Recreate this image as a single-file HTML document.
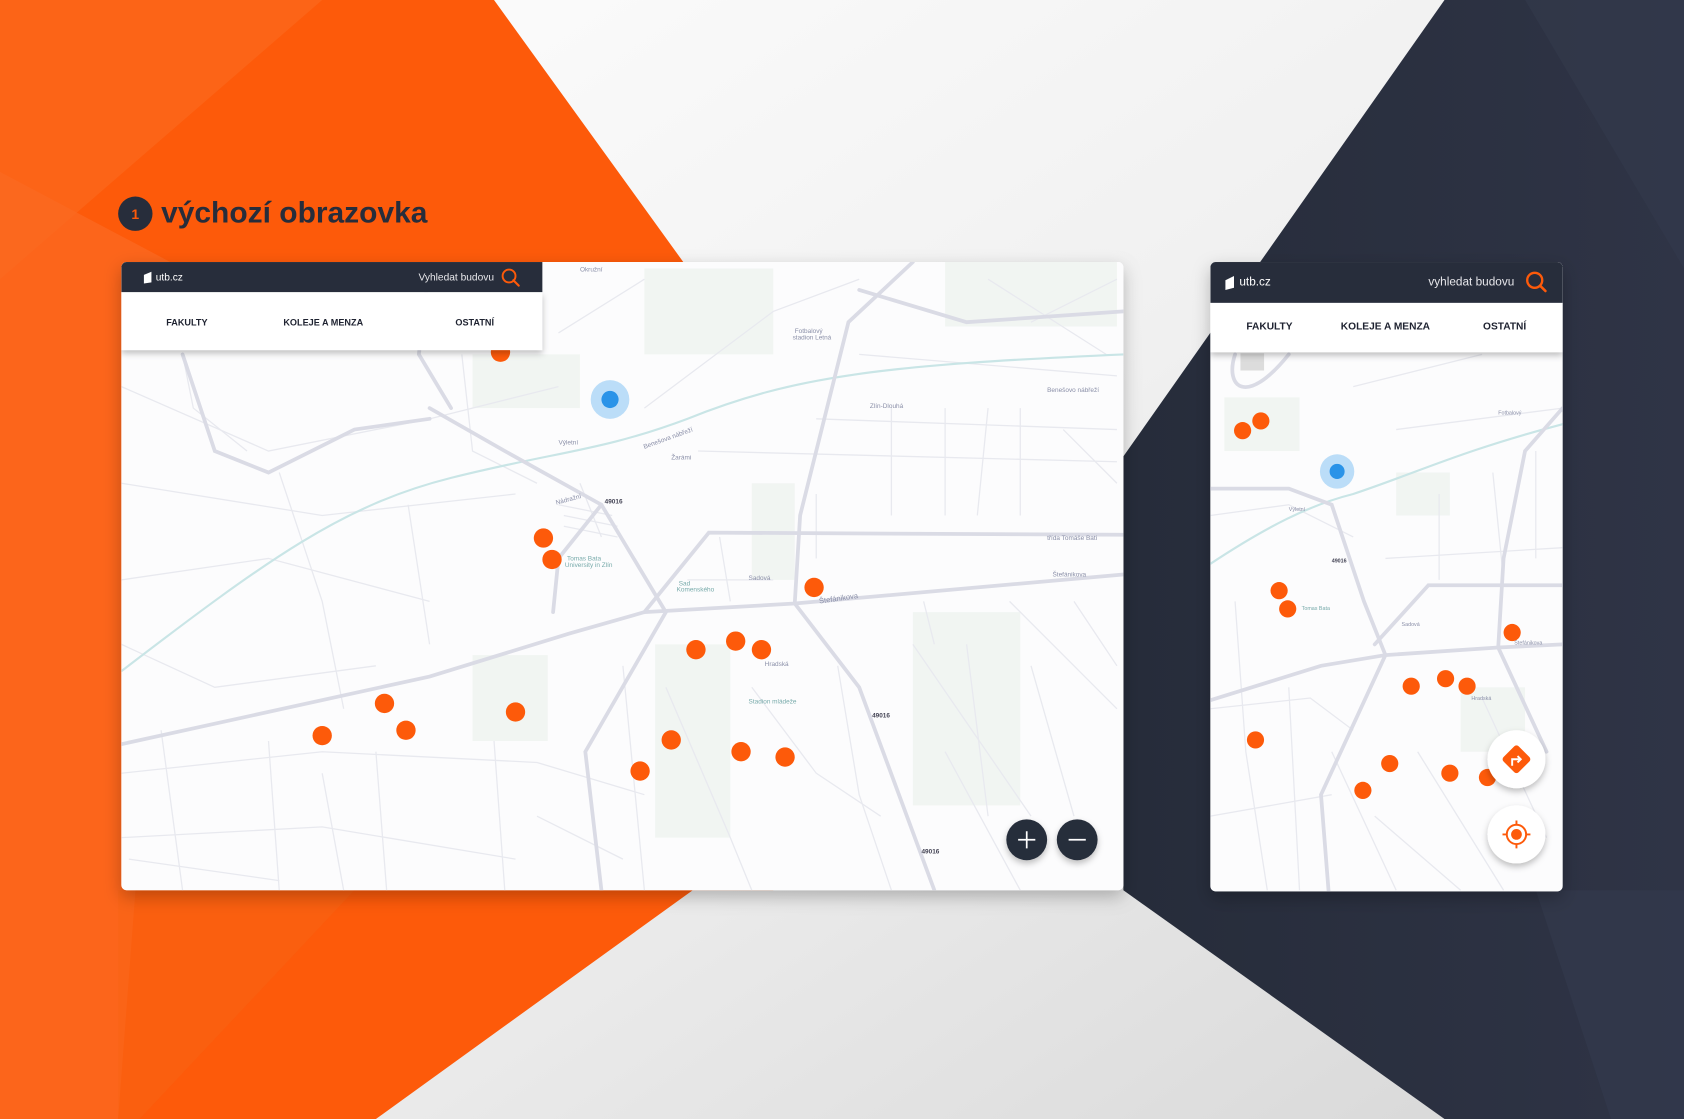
<!DOCTYPE html>
<html><head><meta charset="utf-8"><style>
html,body{margin:0;padding:0;width:1684px;height:1119px;overflow:hidden;background:#eee}
svg{display:block}
text{font-family:"Liberation Sans",sans-serif}
</style></head><body>
<svg width="1684" height="1119" viewBox="0 0 1568 1042" preserveAspectRatio="none" xmlns="http://www.w3.org/2000/svg">
<defs>
<linearGradient id="wbg" x1="0" y1="0" x2="1" y2="1">
<stop offset="0" stop-color="#ffffff"/><stop offset="0.5" stop-color="#f0f0f0"/><stop offset="1" stop-color="#d6d6d6"/></linearGradient>
<linearGradient id="dbg" x1="0" y1="0" x2="1" y2="0">
<stop offset="0" stop-color="#262c3a"/><stop offset="1" stop-color="#2f3446"/></linearGradient>
<filter id="sh" x="-10%" y="-10%" width="120%" height="130%"><feDropShadow dx="0" dy="6" stdDeviation="8" flood-color="#000" flood-opacity="0.25"/></filter>
<filter id="sh2" x="-50%" y="-50%" width="200%" height="200%"><feDropShadow dx="0" dy="3" stdDeviation="3" flood-color="#000" flood-opacity="0.25"/></filter>
<clipPath id="cd"><rect x="113" y="244" width="933" height="585" rx="5"/></clipPath>
<clipPath id="cm"><rect x="1127" y="244" width="328" height="586" rx="5"/></clipPath>
</defs>
<rect width="1568" height="1042" fill="url(#wbg)"/>
<polygon points="0,0 460,0 720,360 720,829 645,829 350,1042 0,1042" fill="#fd5a0a"/>
<polygon points="0,0 300,0 0,260" fill="#fb6a1f" opacity="0.6"/>
<polygon points="0,160 170,250 110,1042 0,1042" fill="#fb6a22" opacity="0.7"/>
<polygon points="110,829 330,829 130,1042 110,1042" fill="#f76414" opacity="0.5"/>
<polygon points="1345,0 1568,0 1568,1042 1345,1042 1046,829 1046,425" fill="url(#dbg)"/>
<polygon points="1420,0 1568,0 1568,250" fill="#343a4c" opacity="0.6"/>
<polygon points="1430,829 1568,829 1568,1042 1500,1042" fill="#343a4e" opacity="0.6"/>
<circle cx="126" cy="199" r="16" fill="#272d3b"/>
<text x="126" y="204" fill="#fd5a0a" font-size="13" font-weight="bold" text-anchor="middle">1</text>
<text x="150" y="207" fill="#272d3b" font-size="28" font-weight="bold" textLength="248" lengthAdjust="spacingAndGlyphs">výchozí obrazovka</text>

<rect x="113" y="244" width="933" height="585" rx="5" fill="#fff" filter="url(#sh)"/>
<g clip-path="url(#cd)">
<rect x="113" y="244" width="933" height="585" fill="#fcfcfd"/>
<g fill="#f1f5f2">
<rect x="600" y="250" width="120" height="80"/><rect x="850" y="570" width="100" height="180"/><rect x="610" y="600" width="70" height="180"/><rect x="440" y="610" width="70" height="80"/><rect x="700" y="450" width="40" height="90"/><rect x="880" y="244" width="160" height="60"/><rect x="440" y="330" width="100" height="50"/>
</g>
<g fill="none" stroke="#e8e9ef" stroke-width="1.2">
<path d="M113,360 L250,420 L400,390 L520,360"/><path d="M113,450 L300,480 L480,460"/><path d="M113,540 L250,520 L400,560"/><path d="M113,600 L200,640 L350,620"/><path d="M170,330 L180,380 L230,420"/><path d="M260,440 L300,560 L320,660"/><path d="M380,470 L400,600"/><path d="M113,720 L300,700 L500,710 L600,740"/><path d="M113,780 L300,770 L480,800"/><path d="M150,680 L170,829"/><path d="M250,690 L260,829"/><path d="M350,700 L360,829"/><path d="M460,690 L470,829"/><path d="M620,640 L680,780 L700,829"/><path d="M700,640 L760,720 L820,760"/><path d="M580,620 L600,829"/><path d="M650,420 L1040,430"/><path d="M760,390 L1040,400"/><path d="M800,330 L1040,350"/><path d="M830,380 L830,480"/><path d="M880,380 L880,480"/><path d="M920,380 L910,480"/><path d="M950,380 L950,480"/><path d="M990,400 L1040,450"/><path d="M760,460 L760,520"/><path d="M850,600 L960,760"/><path d="M900,600 L920,760"/><path d="M940,560 L1040,660"/><path d="M960,620 L1000,760"/><path d="M1000,560 L1040,620"/><path d="M780,620 L800,740 L830,829"/><path d="M880,700 L950,829"/><path d="M670,500 L680,560"/><path d="M640,540 L720,540"/><path d="M600,380 L720,290 L800,260"/><path d="M520,310 L600,260"/><path d="M430,330 L440,420 L500,450"/><path d="M920,260 L1030,330"/><path d="M960,300 L1040,260"/><path d="M540,450 L560,500"/><path d="M520,470 L570,480"/><path d="M525,480 L575,490"/><path d="M525,490 L575,500"/><path d="M860,560 L870,600"/><path d="M300,720 L320,829"/><path d="M500,760 L580,800"/><path d="M120,800 L260,820"/></g>
<path d="M113,625 C250,520 320,470 420,445 C520,420 560,420 640,390 C740,350 820,340 1046,330" fill="none" stroke="#c9e5e6" stroke-width="2"/>
<g fill="none" stroke="#dadbe5" stroke-width="3.5" stroke-linecap="round">
<path d="M113,693 L400,630 L530,590 L600,570 L740,562 L1046,535"/>
<path d="M600,570 L660,496 L1046,498"/>
<path d="M740,562 L745,480 L790,300 L850,244"/>
<path d="M740,562 L800,640 L870,829"/>
<path d="M400,380 L470,420 L560,470 L620,570 L545,700 L560,829"/>
<path d="M420,380 L390,330 L400,244"/>
<path d="M400,390 L330,400 L250,440 L200,420 L170,330"/>
<path d="M560,470 L520,520 L515,570"/>
<path d="M800,270 L900,300 L1046,290"/>
</g>
<g font-size="6" fill="#8a8fa8">
<text x="520" y="414">Výletní</text><text x="600" y="418" transform="rotate(-20 600 418)">Benešova nábřeží</text><text x="625" y="428">Žarámi</text><text x="518" y="470" transform="rotate(-15 518 470)">Nádražní</text>
<text x="528" y="522" fill="#7aa">Tomas Bata</text><text x="526" y="528" fill="#7aa">University in Zlín</text>
<text x="697" y="540">Sadová</text><text x="632" y="545" fill="#7aa">Sad</text><text x="630" y="551" fill="#7aa">Komenského</text>
<text x="763" y="562" font-size="7" transform="rotate(-8 763 562)">Štefánikova</text><text x="975" y="503">třída Tomáše Bati</text><text x="980" y="537">Štefánikova</text>
<text x="697" y="655" fill="#7aa">Stadion mládeže</text><text x="712" y="620">Hradská</text><text x="563" y="469" font-weight="bold" fill="#445">49016</text><text x="858" y="795" font-weight="bold" fill="#445">49016</text><text x="812" y="668" font-weight="bold" fill="#445">49016</text>
<text x="810" y="380">Zlín-Dlouhá</text><text x="975" y="365">Benešovo nábřeží</text><text x="740" y="310">Fotbalový</text><text x="738" y="316">stadion Letná</text><text x="540" y="253">Okružní</text>
</g>
<circle cx="568" cy="372" r="18" fill="#9fd0f5" opacity="0.7"/><circle cx="568" cy="372" r="8" fill="#2a93e8"/>
<g fill="#fd5a0a">
<circle cx="466" cy="328" r="9"/><circle cx="506" cy="501" r="9"/><circle cx="514" cy="521" r="9"/><circle cx="758" cy="547" r="9"/><circle cx="648" cy="605" r="9"/><circle cx="685" cy="597" r="9"/><circle cx="709" cy="605" r="9"/><circle cx="358" cy="655" r="9"/><circle cx="378" cy="680" r="9"/><circle cx="300" cy="685" r="9"/><circle cx="480" cy="663" r="9"/><circle cx="625" cy="689" r="9"/><circle cx="596" cy="718" r="9"/><circle cx="690" cy="700" r="9"/><circle cx="731" cy="705" r="9"/>
</g>
<circle cx="956" cy="782" r="19" fill="#272d3b" filter="url(#sh2)"/><circle cx="1003" cy="782" r="19" fill="#272d3b" filter="url(#sh2)"/>
<path d="M956,774 V790 M948,782 H964" stroke="#fff" stroke-width="1.6"/><path d="M995,782 H1011" stroke="#fff" stroke-width="1.6"/>
<rect x="113" y="272" width="392" height="54" fill="#fff" filter="url(#sh2)"/>
<rect x="113" y="244" width="392" height="28" fill="#272d3b"/>
<path d="M134,256 L141,253 L141,263 L134,264 Z" fill="#fff"/>
<text x="145" y="261" fill="#fff" font-size="9.5">utb.cz</text>
<text x="460" y="261" fill="#e6e6ea" font-size="9.5" text-anchor="end">Vyhledat budovu</text>
<circle cx="474" cy="257" r="6" fill="none" stroke="#fd5a0a" stroke-width="1.8"/><path d="M478,261 L483,266" stroke="#fd5a0a" stroke-width="2" stroke-linecap="round"/>
<g font-size="8.5" font-weight="bold" fill="#1e2230" text-anchor="middle">
<text x="174" y="303">FAKULTY</text><text x="301" y="303">KOLEJE A MENZA</text><text x="442" y="303">OSTATNÍ</text></g>
</g>

<rect x="1127" y="244" width="328" height="586" rx="5" fill="#fff" filter="url(#sh)"/>
<g clip-path="url(#cm)">
<rect x="1127" y="244" width="328" height="586" fill="#fcfcfd"/>
<g fill="#f1f5f2"><rect x="1140" y="370" width="70" height="50"/><rect x="1360" y="640" width="60" height="60"/><rect x="1300" y="440" width="50" height="40"/></g>
<g fill="none" stroke="#e8e9ef" stroke-width="1.2">
<path d="M1127,480 L1200,470 L1260,500"/><path d="M1150,560 L1160,700 L1180,829"/><path d="M1200,640 L1210,829"/><path d="M1127,660 L1220,650 L1260,680"/><path d="M1240,700 L1300,829"/><path d="M1320,700 L1400,829"/><path d="M1290,520 L1455,510"/><path d="M1340,460 L1340,540"/><path d="M1390,440 L1400,540"/><path d="M1430,420 L1430,520"/><path d="M1127,760 L1240,740"/><path d="M1280,760 L1360,829"/><path d="M1380,650 L1440,780"/><path d="M1260,360 L1380,330"/><path d="M1300,400 L1455,380"/></g>
<path d="M1127,525 C1180,490 1220,470 1260,460 C1320,440 1360,420 1455,395" fill="none" stroke="#c9e5e6" stroke-width="2"/>
<g fill="none" stroke="#dadbe5" stroke-width="3.5" stroke-linecap="round">
<path d="M1127,652 L1230,620 L1290,610 L1395,603 L1455,600"/>
<path d="M1280,600 L1330,545 L1455,545"/>
<path d="M1395,603 L1400,520 L1420,420 L1455,380"/>
<path d="M1395,603 L1440,700"/>
<path d="M1127,455 L1200,455 L1240,470 L1270,560 L1290,610 L1230,740 L1237,829"/>
<path d="M1150,330 C1140,360 1160,380 1200,330"/>
</g>
<rect x="1155" y="329" width="22" height="16" fill="#dcdcdc"/>
<g font-size="5" fill="#8a8fa8"><text x="1200" y="476">Výletní</text><text x="1305" y="583">Sadová</text><text x="1410" y="600">Štefánikova</text><text x="1212" y="568" fill="#7aa">Tomas Bata</text><text x="1370" y="652">Hradská</text><text x="1240" y="524" font-weight="bold" fill="#445">49016</text><text x="1395" y="386">Fotbalový</text></g>
<circle cx="1245" cy="439" r="16" fill="#9fd0f5" opacity="0.7"/><circle cx="1245" cy="439" r="7" fill="#2a93e8"/>
<g fill="#fd5a0a">
<circle cx="1157" cy="401" r="8"/><circle cx="1174" cy="392" r="8"/><circle cx="1191" cy="550" r="8"/><circle cx="1199" cy="567" r="8"/><circle cx="1408" cy="589" r="8"/><circle cx="1314" cy="639" r="8"/><circle cx="1346" cy="632" r="8"/><circle cx="1366" cy="639" r="8"/><circle cx="1169" cy="689" r="8"/><circle cx="1294" cy="711" r="8"/><circle cx="1269" cy="736" r="8"/><circle cx="1350" cy="720" r="8"/><circle cx="1385" cy="724" r="8"/></g>
<circle cx="1412" cy="707" r="27" fill="#fff" filter="url(#sh2)"/>
<rect x="1402" y="697" width="20" height="20" rx="3" fill="#fd5a0a" transform="rotate(45 1412 707)"/>
<path d="M1408,713 V707 H1416 M1413,704 L1416,707 L1413,710" fill="none" stroke="#fff" stroke-width="1.8"/>
<circle cx="1412" cy="777" r="27" fill="#fff" filter="url(#sh2)"/>
<circle cx="1412" cy="777" r="9" fill="none" stroke="#fd5a0a" stroke-width="1.8"/><circle cx="1412" cy="777" r="5" fill="#fd5a0a"/>
<path d="M1412,764 V768 M1412,786 V790 M1399,777 H1403 M1421,777 H1425" stroke="#fd5a0a" stroke-width="1.8"/>
<rect x="1127" y="282" width="328" height="46" fill="#fff" filter="url(#sh2)"/>
<rect x="1127" y="244" width="328" height="38" fill="#272d3b"/>
<path d="M1141,261 L1149,257 L1149,268 L1141,270 Z" fill="#fff"/>
<text x="1154" y="266" fill="#fff" font-size="11">utb.cz</text>
<text x="1410" y="266" fill="#e6e6ea" font-size="11" text-anchor="end">vyhledat budovu</text>
<circle cx="1429" cy="261" r="7" fill="none" stroke="#fd5a0a" stroke-width="2.2"/><path d="M1434,266 L1439,271" stroke="#fd5a0a" stroke-width="2.4" stroke-linecap="round"/>
<g font-size="9.5" font-weight="bold" fill="#1e2230" text-anchor="middle">
<text x="1182" y="307">FAKULTY</text><text x="1290" y="307">KOLEJE A MENZA</text><text x="1401" y="307">OSTATNÍ</text></g>
</g>
</svg>
</body></html>
